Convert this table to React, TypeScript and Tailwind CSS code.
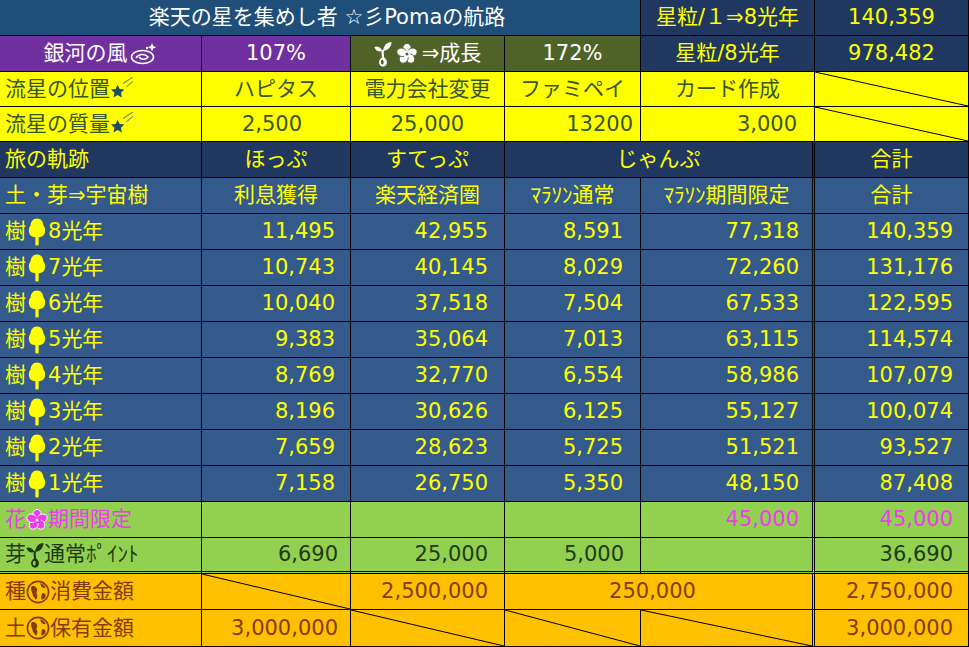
import type { ReactNode } from "react";

type CellProps = {
  children?: ReactNode;
  className?: string;
  diag?: boolean;
};

function Cell({ children, className = "", diag }: CellProps) {
  return (
    <div className={`relative flex items-center whitespace-nowrap border-b border-r border-black ${className}`}>
      {children}
      {diag && (
        <svg className="absolute inset-0 h-full w-full" viewBox="0 0 100 100" preserveAspectRatio="none">
          <line x1="0" y1="0" x2="100" y2="100" stroke="black" strokeWidth="1" vectorEffect="non-scaling-stroke" />
        </svg>
      )}
    </div>
  );
}

function Galaxy() {
  return (
    <svg width="28" height="24" viewBox="0 0 28 24" fill="none" stroke="white" strokeWidth="1.6" className="ml-0.5 shrink-0">
      <ellipse cx="12.5" cy="15" rx="11" ry="6.5" />
      <path d="M6 16c2-4 9-5 12-1c-2 3-7 3-9 0" />
      <path d="M22 1l1.2 3 3 1.2-3 1.2-1.2 3-1.2-3-3-1.2 3-1.2z" fill="white" stroke="none" />
      <circle cx="17" cy="6" r="1.2" fill="white" stroke="none" />
    </svg>
  );
}

function Seedling({ color, seed }: { color: string; seed: string }) {
  return (
    <svg width="18" height="26" viewBox="0 0 16 24" className="shrink-0">
      <path d="M7.5 9C5 4.5 2 4.5 0 5.5C1.5 9.5 5 10.5 7.5 9Z" fill={color} />
      <path d="M8 9C9 3.5 12 1 16 1C15.5 6 12 9.5 8 9Z" fill={color} />
      <path d="M8 8.5C7 12 8.5 14 8 17" stroke={color} strokeWidth="2" fill="none" />
      <ellipse cx="8" cy="19.5" rx="3.6" ry="4.2" fill={color} />
      <ellipse cx="7.3" cy="19.5" rx="1.3" ry="2.2" fill={seed} />
    </svg>
  );
}

function Flower({ fill, line }: { fill: string; line: string }) {
  const petals = [0, 72, 144, 216, 288];
  return (
    <svg width="22" height="22" viewBox="-10 -10 20 20" className="shrink-0">
      {petals.map((a) => (
        <ellipse key={a} cx="0" cy="-5" rx="3.8" ry="4.6" fill={fill} stroke={line} strokeWidth="0.8" transform={`rotate(${a})`} />
      ))}
      <circle cx="0" cy="0" r="3.2" fill={fill} />
      <circle cx="0" cy="0" r="1.4" fill={line} />
    </svg>
  );
}

function ShootingStar() {
  return (
    <svg width="24" height="24" viewBox="0 0 22 22" className="shrink-0">
      <path d="M12 6l9-6M15 9l6-5" stroke="#7d8c70" strokeWidth="1" />
      <path d="M7 7l1.9 4 4.3.5-3.2 2.9.9 4.3L7 16.5l-3.8 2.2.9-4.3-3.2-2.9 4.3-.5z" fill="#1f4e60" />
    </svg>
  );
}

function Tree() {
  return (
    <svg width="20" height="28" viewBox="0 0 16 24" className="mx-px shrink-0">
      <path d="M8 0.5C11.5 0.5 13.5 3.5 13.5 6.5C15.5 8.5 15.5 13 13.5 15C12 17 4 17 2.5 15C0.5 13 0.5 8.5 2.5 6.5C2.5 3.5 4.5 0.5 8 0.5Z" fill="#ffff00" />
      <rect x="6.6" y="15" width="2.8" height="8.5" fill="#ffff00" />
    </svg>
  );
}

function Globe() {
  return (
    <svg width="24" height="24" viewBox="0 0 22 22" className="shrink-0">
      <circle cx="11" cy="11" r="9.7" fill="none" stroke="#843c0c" strokeWidth="1.5" />
      <path d="M5 6c2-1 4 0 5 2c1 2-1 3 0 5c1 2 0 4-1 5c-1-2-3-3-3-5c0-2-2-3-1-7z" fill="#843c0c" />
      <path d="M13 3c2 0 4 2 5 4c-1 1-3 0-4-1c0-1-1-2-1-3z" fill="#843c0c" />
      <path d="M15 12c2 0 3 1 3 3c-1 2-2 3-4 3c0-2 0-4 1-6z" fill="#843c0c" />
    </svg>
  );
}

const trees = [
  ["8", "11,495", "42,955", "8,591", "77,318", "140,359"],
  ["7", "10,743", "40,145", "8,029", "72,260", "131,176"],
  ["6", "10,040", "37,518", "7,504", "67,533", "122,595"],
  ["5", "9,383", "35,064", "7,013", "63,115", "114,574"],
  ["4", "8,769", "32,770", "6,554", "58,986", "107,079"],
  ["3", "8,196", "30,626", "6,125", "55,127", "100,074"],
  ["2", "7,659", "28,623", "5,725", "51,521", "93,527"],
  ["1", "7,158", "26,750", "5,350", "48,150", "87,408"],
];

export default function App() {
  const navy = "bg-[#20385f] text-[#ffff00]";
  const blue = "bg-[#345a8b] text-[#ffff00]";
  const yellow = "bg-[#ffff00] text-[#375623]";
  const green = "bg-[#92d050] text-[#1f3a14]";
  const orange = "bg-[#ffc000] text-[#843c0c]";
  const dbl = "border-double border-r-[3px]";

  return (
    <div className="h-[647px] w-[969px] overflow-hidden bg-[#345a8b] font-[family-name:'DejaVu_Sans','Noto_Sans_CJK_JP',sans-serif] text-[21px] leading-none">
      <div className="grid grid-cols-[202px_149px_154px_136px_174px_154px] grid-rows-[36px_36px_35px_35px_repeat(13,36px)_37px]">
        {/* title */}
        <Cell className="col-span-4 justify-center bg-[#1f4e79] pl-[14px] text-white">楽天の星を集めし者 ☆彡Pomaの航路</Cell>
        <Cell className={`justify-center ${navy}`}>星粒/１⇒8光年</Cell>
        <Cell className={`justify-center ${navy}`}>140,359</Cell>

        {/* growth */}
        <Cell className="justify-center bg-[#7030a0] text-white">
          銀河の風<Galaxy />
        </Cell>
        <Cell className="justify-center bg-[#7030a0] text-white">107%</Cell>
        <Cell className="justify-center gap-1 bg-[#4f6228] text-white">
          <Seedling color="white" seed="#4f6228" />
          <Flower fill="white" line="#4f6228" />
          <span>⇒成長</span>
        </Cell>
        <Cell className="justify-center bg-[#4f6228] text-white">172%</Cell>
        <Cell className={`justify-center ${navy}`}>星粒/8光年</Cell>
        <Cell className={`justify-center ${navy}`}>978,482</Cell>

        {/* meteors */}
        <Cell className={`pl-[5px] ${yellow}`}>
          流星の位置<ShootingStar />
        </Cell>
        <Cell className={`justify-center ${yellow}`}>ハピタス</Cell>
        <Cell className={`justify-center ${yellow}`}>電力会社変更</Cell>
        <Cell className={`justify-center ${yellow}`}>ファミペイ</Cell>
        <Cell className={`justify-center ${yellow}`}>カード作成</Cell>
        <Cell className={yellow} diag />

        <Cell className={`pl-[5px] ${yellow}`}>
          流星の質量<ShootingStar />
        </Cell>
        <Cell className={`justify-center pr-2 ${yellow}`}>2,500</Cell>
        <Cell className={`justify-center ${yellow}`}>25,000</Cell>
        <Cell className={`justify-end pr-[7px] ${yellow}`}>13200</Cell>
        <Cell className={`justify-end pr-[17px] ${yellow}`}>3,000</Cell>
        <Cell className={yellow} diag />

        {/* journey header */}
        <Cell className={`pl-[5px] ${navy}`}>旅の軌跡</Cell>
        <Cell className={`justify-center ${navy}`}>ほっぷ</Cell>
        <Cell className={`justify-center ${navy}`}>すてっぷ</Cell>
        <Cell className={`col-span-2 justify-center ${navy} ${dbl}`}>じゃんぷ</Cell>
        <Cell className={`justify-center ${navy}`}>合計</Cell>

        <Cell className={`pl-[5px] ${blue}`}>土・芽⇒宇宙樹</Cell>
        <Cell className={`justify-center ${blue}`}>利息獲得</Cell>
        <Cell className={`justify-center ${blue}`}>楽天経済圏</Cell>
        <Cell className={`justify-center ${blue}`}>ﾏﾗｿﾝ通常</Cell>
        <Cell className={`justify-center ${blue} ${dbl}`}>ﾏﾗｿﾝ期間限定</Cell>
        <Cell className={`justify-center ${blue}`}>合計</Cell>

        {trees.map(([yr, b, c, d, e, f]) => (
          <div key={yr} className="contents">
            <Cell className={`pl-[5px] ${blue}`}>
              樹<Tree />
              {yr}光年
            </Cell>
            <Cell className={`justify-end pr-[15px] ${blue}`}>{b}</Cell>
            <Cell className={`justify-end pr-4 ${blue}`}>{c}</Cell>
            <Cell className={`justify-end pr-[17px] ${blue}`}>{d}</Cell>
            <Cell className={`justify-end pr-[13px] ${blue} ${dbl}`}>{e}</Cell>
            <Cell className={`justify-end pr-[15px] ${blue}`}>{f}</Cell>
          </div>
        ))}

        {/* flower / sprout */}
        <Cell className={`pl-[5px] ${green} text-[#ee3cee]`}>
          花<Flower fill="#ee3cee" line="#ffffff" />
          期間限定
        </Cell>
        <Cell className={green} />
        <Cell className={green} />
        <Cell className={green} />
        <Cell className={`justify-end pr-[13px] ${green} ${dbl} text-[#ee3cee]`}>45,000</Cell>
        <Cell className={`justify-end pr-[15px] ${green} text-[#ee3cee]`}>45,000</Cell>

        <Cell className={`border-double border-b-[3px] pl-[5px] ${green}`}>
          芽<Seedling color="#1f3a14" seed="#92d050" />
          通常ﾎﾟｲﾝﾄ
        </Cell>
        <Cell className={`border-double border-b-[3px] justify-end pr-[12px] ${green}`}>6,690</Cell>
        <Cell className={`border-double border-b-[3px] justify-end pr-4 ${green}`}>25,000</Cell>
        <Cell className={`border-double border-b-[3px] justify-end pr-4 ${green}`}>5,000</Cell>
        <Cell className={`border-double border-b-[3px] ${green} border-r-[3px]`} />
        <Cell className={`border-double border-b-[3px] justify-end pr-[15px] ${green}`}>36,690</Cell>

        {/* money */}
        <Cell className={`pl-[5px] ${orange}`}>
          種<Globe />
          消費金額
        </Cell>
        <Cell className={orange} diag />
        <Cell className={`justify-end pr-4 ${orange}`}>2,500,000</Cell>
        <Cell className={`col-span-2 justify-center pr-3 ${orange} ${dbl}`}>250,000</Cell>
        <Cell className={`justify-end pr-[15px] ${orange}`}>2,750,000</Cell>

        <Cell className={`pl-[5px] ${orange}`}>
          土<Globe />
          保有金額
        </Cell>
        <Cell className={`justify-end pr-[12px] ${orange}`}>3,000,000</Cell>
        <Cell className={orange} diag />
        <Cell className={orange} diag />
        <Cell className={`${orange} ${dbl}`} diag />
        <Cell className={`justify-end pr-[15px] ${orange}`}>3,000,000</Cell>
      </div>
    </div>
  );
}
